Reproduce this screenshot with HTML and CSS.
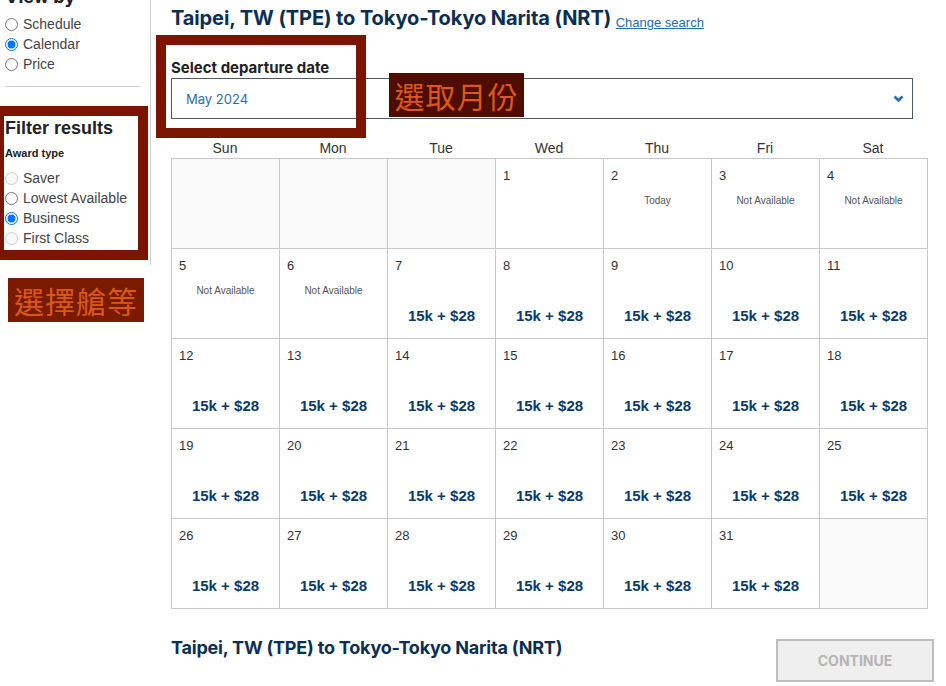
FILE: index.html
```html
<!DOCTYPE html>
<html lang="en">
<head>
    <meta charset="UTF-8">
    <meta name="viewport" content="width=device-width, initial-scale=1.0">
    <title>Select departure date</title>
    <link rel="stylesheet" href="styles.css">
</head>
<body>
    <div class="page">

        <div class="sidebar">
            <p class="view-title">View by</p>
            <label class="option"><input type="radio" name="view">Schedule</label>
            <label class="option"><input type="radio" name="view" checked>Calendar</label>
            <label class="option"><input type="radio" name="view">Price</label>
            <div class="divider"></div>

            <p class="filter-title">Filter results</p>
            <p class="filter-label">Award type</p>
            <label class="option"><input type="radio" name="award" disabled>Saver</label>
            <label class="option"><input type="radio" name="award">Lowest Available</label>
            <label class="option"><input type="radio" name="award" checked>Business</label>
            <label class="option"><input type="radio" name="award" disabled>First Class</label>

            <div class="mark mark-filter"></div>
            <div class="note note-class">選擇艙等</div>
        </div>

        <div class="main">
            <h1 class="route-title">
                Taipei, TW (TPE) to Tokyo-Tokyo Narita (NRT)
                <a href="#" class="change-link">Change search</a>
            </h1>

            <p class="date-label">Select departure date</p>
            <div class="month-select">
                <span>May 2024</span>
                <svg class="chevron" width="11" height="8" viewBox="0 0 11 8">
                    <path d="M1.5 1.5 L5.5 5.5 L9.5 1.5" fill="none" stroke="#2a6eb0" stroke-width="2.6"/>
                </svg>
            </div>

            <div class="mark mark-date"></div>
            <div class="note note-month">選取月份</div>

            <div class="weekdays">
                <span>Sun</span><span>Mon</span><span>Tue</span><span>Wed</span><span>Thu</span><span>Fri</span><span>Sat</span>
            </div>

            <div class="calendar">
                <div class="day empty"></div>
                <div class="day empty"></div>
                <div class="day empty"></div>
                <div class="day"><span class="num">1</span></div>
                <div class="day"><span class="num">2</span><span class="info">Today</span></div>
                <div class="day"><span class="num">3</span><span class="info">Not Available</span></div>
                <div class="day"><span class="num">4</span><span class="info">Not Available</span></div>

                <div class="day"><span class="num">5</span><span class="info">Not Available</span></div>
                <div class="day"><span class="num">6</span><span class="info">Not Available</span></div>
                <div class="day"><span class="num">7</span><span class="price">15k + $28</span></div>
                <div class="day"><span class="num">8</span><span class="price">15k + $28</span></div>
                <div class="day"><span class="num">9</span><span class="price">15k + $28</span></div>
                <div class="day"><span class="num">10</span><span class="price">15k + $28</span></div>
                <div class="day"><span class="num">11</span><span class="price">15k + $28</span></div>

                <div class="day"><span class="num">12</span><span class="price">15k + $28</span></div>
                <div class="day"><span class="num">13</span><span class="price">15k + $28</span></div>
                <div class="day"><span class="num">14</span><span class="price">15k + $28</span></div>
                <div class="day"><span class="num">15</span><span class="price">15k + $28</span></div>
                <div class="day"><span class="num">16</span><span class="price">15k + $28</span></div>
                <div class="day"><span class="num">17</span><span class="price">15k + $28</span></div>
                <div class="day"><span class="num">18</span><span class="price">15k + $28</span></div>

                <div class="day"><span class="num">19</span><span class="price">15k + $28</span></div>
                <div class="day"><span class="num">20</span><span class="price">15k + $28</span></div>
                <div class="day"><span class="num">21</span><span class="price">15k + $28</span></div>
                <div class="day"><span class="num">22</span><span class="price">15k + $28</span></div>
                <div class="day"><span class="num">23</span><span class="price">15k + $28</span></div>
                <div class="day"><span class="num">24</span><span class="price">15k + $28</span></div>
                <div class="day"><span class="num">25</span><span class="price">15k + $28</span></div>

                <div class="day"><span class="num">26</span><span class="price">15k + $28</span></div>
                <div class="day"><span class="num">27</span><span class="price">15k + $28</span></div>
                <div class="day"><span class="num">28</span><span class="price">15k + $28</span></div>
                <div class="day"><span class="num">29</span><span class="price">15k + $28</span></div>
                <div class="day"><span class="num">30</span><span class="price">15k + $28</span></div>
                <div class="day"><span class="num">31</span><span class="price">15k + $28</span></div>
                <div class="day empty"></div>
            </div>

            <div class="footer">
                <p class="footer-title">Taipei, TW (TPE) to Tokyo-Tokyo Narita (NRT)</p>
                <button class="continue-button" disabled>CONTINUE</button>
            </div>
        </div>

    </div>
</body>
</html>
```

FILE: styles.css
```css
body{
    margin: 0;
    background-color: white;
    font-family: "Liberation Sans", Arial, sans-serif;
    color: #333;
    overflow: hidden;
}

.page{
    display: flex;
    align-items: flex-start;
}

.sidebar{
    position: relative;
    width: 150px;
    height: 265px;
    border-right: 1px solid #d0d0d0;
    flex-shrink: 0;
}
.view-title{
    margin: -17px 0 0 5px;
    font-family: "Inter", sans-serif;
    font-size: 18px;
    font-weight: bold;
    line-height: 28px;
    color: #222;
}
.option{
    display: flex;
    align-items: center;
    height: 20px;
    font-size: 14px;
    color: #444;
    white-space: nowrap;
}
.view-title + .option{
    margin-top: 3px;
}
.option input{
    width: 13px;
    height: 13px;
    margin: 0 5px 0 5px;
}
.divider{
    margin: 12px 10px 0 5px;
    border-top: 1px solid #d0d0d0;
}
.filter-title{
    margin: 30px 0 0 5px;
    font-size: 18px;
    font-weight: bold;
    line-height: 22px;
    color: #222;
}
.filter-label{
    margin: 7px 0 8px 5px;
    font-size: 11px;
    font-weight: bold;
    line-height: 14px;
    color: #222;
}

/* annotations drawn over the page */
.mark{
    position: absolute;
    border: 10px solid #7b1500;
    box-sizing: border-box;
}
.mark-filter{
    left: -6px;
    top: 106px;
    width: 154px;
    height: 154px;
}
.mark-date{
    left: 5px;
    top: 35px;
    width: 210px;
    height: 103px;
}
.note{
    position: absolute;
    font-family: "Noto Sans CJK TC", "Noto Sans CJK SC", sans-serif;
    font-size: 30px;
    line-height: 44px;
    color: #d9581a;
    text-align: center;
    letter-spacing: 1px;
}
.note-class{
    left: 8px;
    top: 278px;
    width: 136px;
    background-color: #7a1a00;
}
.note-month{
    left: 238px;
    top: 73px;
    width: 135px;
    background-color: #4f0c00;
}

.main{
    position: relative;
    padding: 6px 12px 0 20px;
    flex-grow: 1;
}
.route-title{
    margin: 0;
    font-family: "Inter", sans-serif;
    font-size: 20px;
    font-weight: bold;
    line-height: 24px;
    letter-spacing: -0.1px;
    color: #0b2f52;
}
.change-link{
    position: relative;
    top: 2px;
    font-family: "Liberation Sans", Arial, sans-serif;
    font-size: 13px;
    font-weight: normal;
    letter-spacing: 0;
    color: #1b6cb4;
}
.date-label{
    margin: 26px 0 1px 0;
    font-family: "Inter", sans-serif;
    font-size: 15px;
    font-weight: bold;
    line-height: 18px;
    color: #222;
}
.month-select{
    display: flex;
    align-items: center;
    justify-content: space-between;
    width: 742px;
    height: 41px;
    box-sizing: border-box;
    border: 1.5px solid #4f5a66;
    padding: 0 8px 0 14px;
    font-family: "Inter", sans-serif;
    font-size: 13px;
    color: #2a6eb0;
}

.weekdays{
    display: grid;
    grid-template-columns: repeat(7, 108px);
    margin-top: 19px;
    font-size: 14px;
    line-height: 20px;
    text-align: center;
    color: #333;
}
.calendar{
    display: grid;
    grid-template-columns: repeat(7, 108px);
    grid-auto-rows: 90px;
    width: 757px;
    border-left: 1px solid #c8c8c8;
    border-top: 1px solid #c8c8c8;
    box-sizing: border-box;
}
.day{
    display: flex;
    flex-direction: column;
    border-right: 1px solid #c8c8c8;
    border-bottom: 1px solid #c8c8c8;
    padding: 8px 0 13px 0;
}
.day.empty{
    background-color: #f9f9f9;
}
.num{
    padding-left: 7px;
    font-size: 13px;
    line-height: 18px;
}
.info{
    margin-top: 9px;
    font-size: 10px;
    line-height: 14px;
    text-align: center;
    color: #555;
}
.price{
    margin-top: auto;
    font-size: 15px;
    font-weight: bold;
    line-height: 18px;
    text-align: center;
    color: #0b3b66;
}

.footer{
    display: flex;
    justify-content: space-between;
    align-items: flex-start;
    margin-top: 30px;
}
.footer-title{
    margin: -2px 0 0 0;
    font-family: "Inter", sans-serif;
    font-size: 18px;
    font-weight: bold;
    line-height: 22px;
    letter-spacing: -0.2px;
    color: #0b2f52;
}
.continue-button{
    width: 158px;
    height: 43px;
    background-color: #efefef;
    border: 2px solid #bdbdbd;
    font-family: "Inter", sans-serif;
    font-size: 14px;
    font-weight: bold;
    color: #b5b5b5;
}
```
